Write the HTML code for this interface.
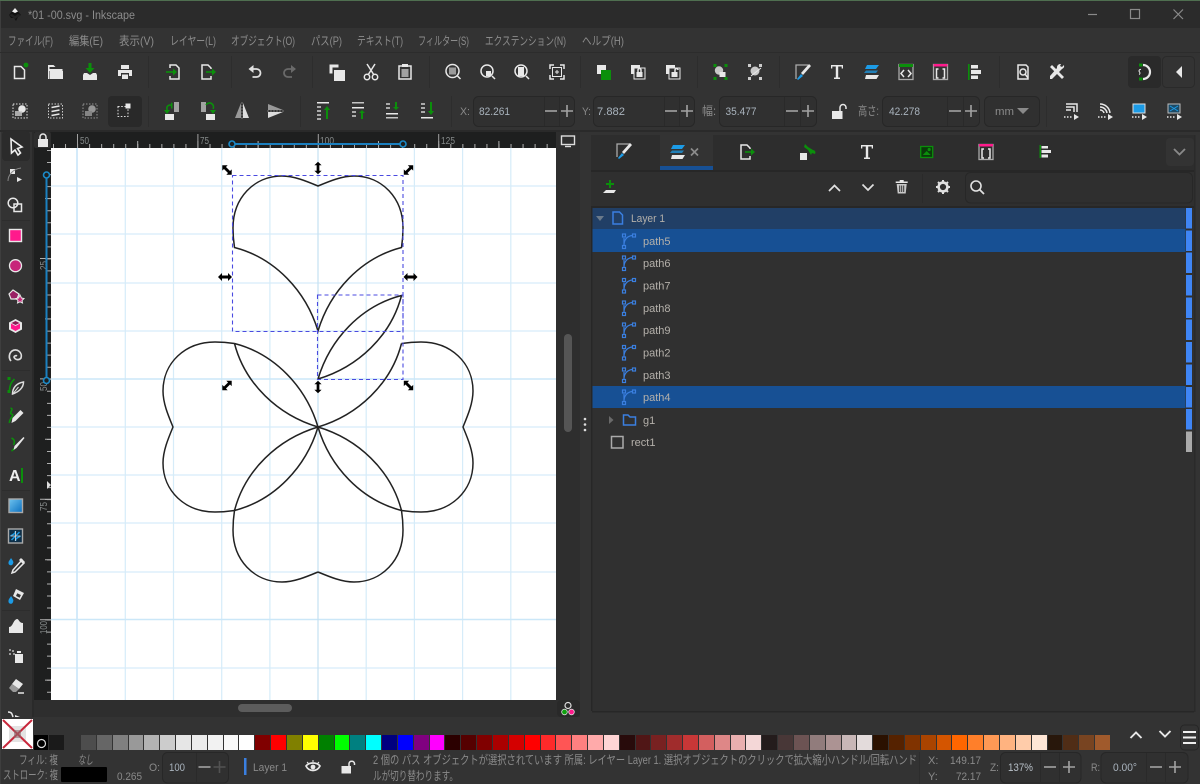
<!DOCTYPE html>
<html lang="ja"><head><meta charset="utf-8"><title>Inkscape</title>
<style>
html,body{margin:0;padding:0;background:#333;width:1200px;height:784px;overflow:hidden}
body{filter:blur(.3px)}
svg{position:absolute;left:0;top:0}
text{font-family:"Liberation Sans","Noto Sans CJK JP",sans-serif;font-size:11px;fill:#a8a8a8}
.m{fill:#8c8c8c;font-size:12px}
.l{fill:#b4b0aa;font-size:11px}
.d{fill:#8a8a8a;font-size:11px}
.j{font-size:12px}
.v{fill:#a9b3bd;font-size:11px}
.r{fill:#858a8a;font-size:10px}
.w{fill:#e8e8e8}
.s{fill:none;stroke:#e8e8e8;stroke-width:1.5}
.g{fill:#0b8f0b}
.gs{fill:none;stroke:#0b8f0b;stroke-width:1.6}
.b{fill:#1c9be6}
.p{fill:#ff1a8c}
.q{fill:#c8c8c8}
.pm{stroke:#a2a2a2;stroke-width:1.6;fill:none}
.box{fill:#303030;stroke:#272727;stroke-width:1}
#pal{position:absolute;left:33.5px;top:734.5px;width:1076.5px;height:15px;display:flex;gap:1px}
#pal i{flex:1;display:block}
</style></head><body>
<svg width="1200" height="784" viewBox="0 0 1200 784" xmlns="http://www.w3.org/2000/svg">
<defs>
<g id="pi" fill="none" stroke="#3a7fe0" stroke-width="1.2"><path d="M-5,-3 V4 M-5,4 C-5,-2 -1,-5 3,-5.5"/><rect x="-6.5" y="-7" width="3" height="3"/><rect x="3.5" y="-7" width="3" height="3"/><rect x="-6.5" y="4.5" width="3" height="3"/></g>
<path id="ar" d="M-7,0 L-3,-4 V-1.5 H3 V-4 L7,0 L3,4 V1.5 H-3 V4Z" fill="#000"/>
<g id="sp"><path class="pm" d="M-6,0 H6"/></g>
<g id="pl"><path class="pm" d="M-6,0 H6 M0,-6 V6"/></g>
</defs>
<rect width="1200" height="784" fill="#333"/>
<rect width="1200" height="28" fill="#2b2b2b"/>
<rect width="1200" height="1" fill="#4f6f50"/>
<rect y="1" width="1" height="783" fill="#3e3e3e"/>
<rect y="52" width="1200" height="1" fill="#2c2c2c"/>
<rect y="130" width="1200" height="2" fill="#2a2a2a"/>

<!-- title -->
<g transform="translate(15,15)"><path d="M0,-7 L6,0 L3,2 L1,6 L-1,3 L-4,3 L-6,0Z" fill="#111"/><path d="M0,-7 L3,-3.5 L0,-2 L-3,-3.5Z" fill="#eee"/><path d="M-6,0 L-3,-1 L0,1 L3,-1 L6,0 L0,4Z" fill="#222"/></g>
<text x="28" y="19" style="fill:#8c8c8c;font-size:11.5px" textLength="107" lengthAdjust="spacingAndGlyphs">*01 -00.svg - Inkscape</text>
<path d="M1088,14.5 H1097" stroke="#8a8a8a" stroke-width="1.2"/>
<rect x="1130.5" y="9.5" width="9" height="9" fill="none" stroke="#8a8a8a" stroke-width="1.2"/>
<path d="M1173.5,9.5 L1183,19 M1183,9.5 L1173.5,19" stroke="#8a8a8a" stroke-width="1.2"/>

<!-- menu -->
<text class="m" x="8" y="45" textLength="45" lengthAdjust="spacingAndGlyphs">ファイル(F)</text>
<text class="m" x="69" y="45" textLength="34" lengthAdjust="spacingAndGlyphs">編集(E)</text>
<text class="m" x="119" y="45" textLength="35" lengthAdjust="spacingAndGlyphs">表示(V)</text>
<text class="m" x="170" y="45" textLength="46" lengthAdjust="spacingAndGlyphs">レイヤー(L)</text>
<text class="m" x="231" y="45" textLength="64" lengthAdjust="spacingAndGlyphs">オブジェクト(O)</text>
<text class="m" x="311" y="45" textLength="31" lengthAdjust="spacingAndGlyphs">パス(P)</text>
<text class="m" x="357" y="45" textLength="46" lengthAdjust="spacingAndGlyphs">テキスト(T)</text>
<text class="m" x="418" y="45" textLength="51" lengthAdjust="spacingAndGlyphs">フィルター(S)</text>
<text class="m" x="485" y="45" textLength="81" lengthAdjust="spacingAndGlyphs">エクステンション(N)</text>
<text class="m" x="582" y="45" textLength="42" lengthAdjust="spacingAndGlyphs">ヘルプ(H)</text>

<!-- separators -->
<path d="M148.5,56V88 M231.5,56V88 M312.5,56V88 M429.5,56V88 M580.5,56V88 M697.5,56V88 M779.5,56V88 M999.5,56V88 M148.5,96V127 M300.5,96V127 M451.5,96V127 M1046.5,96V127" stroke="#2d2d2d"/>

<!-- row 1 icons -->
<g transform="translate(20,72)"><path class="s" d="M-5.5,-5.5 H1 L4.5,-2 V6.5 H-5.5Z"/><circle class="g" cx="6" cy="-7" r="2.4"/></g>
<g transform="translate(55.5,72)"><path class="w" d="M-7.5,-7 H-2 L0,-5 H-6 V-3 H7 V-1 H-6 V7 H7.5 V-1 L7.5,7 H-7.5Z"/><path class="w" d="M-5.5,-1 H7.5 V7 H-5.5Z"/></g>
<g transform="translate(90,72)"><path class="g" d="M-1.5,-9 H1.5 V-4 H4.5 L0,1 L-4.5,-4 H-1.5Z"/><path class="w" d="M-6,1 H-3 L0,3 L3,1 H6 L7,3 V8 H-7 V3Z"/></g>
<g transform="translate(125,72)"><path class="w" d="M-4,-7 H4 V-3 H-4Z M-7,-2 H7 V4 H4 V1 H-4 V4 H-7Z M-3,2.5 H3 V7 H-3Z"/></g>
<g transform="translate(173,72)"><path class="s" d="M-3,-4 V-7 H3 L6,-4 V7 H-3 V4"/><path class="gs" d="M-7,0 H1"/><path class="g" d="M0,-3.5 L4,0 L0,3.5Z"/></g>
<g transform="translate(207,72)"><path class="s" d="M4,-3 V-4 L1,-7 H-5 V7 H4 V4"/><path class="gs" d="M-1,0 H6"/><path class="g" d="M5,-3.5 L9,0 L5,3.5Z"/></g>
<g transform="translate(254.5,72)"><path d="M-5,-3 H2 A4,4 0 0 1 2,5 H-2" fill="none" stroke="#e0e0e0" stroke-width="1.8"/><path d="M-1,-7 L-6,-3 L-1,1Z" fill="#e0e0e0"/></g>
<g transform="translate(290,72)"><path d="M5,-3 H-2 A4,4 0 0 0 -2,5 H2" fill="none" stroke="#6a6a6a" stroke-width="1.8"/><path d="M1,-7 L6,-3 L1,1Z" fill="#6a6a6a"/></g>
<g transform="translate(337,72)"><rect class="w" x="-7.5" y="-7.5" width="9" height="9"/><rect x="-4.5" y="-4.5" width="11" height="11" fill="#333"/><rect class="w" x="-3" y="-2" width="11" height="11"/></g>
<g transform="translate(371,72)"><path class="s" d="M-4,-8 L3,3 M4,-8 L-3,3"/><circle class="s" cx="-4" cy="5" r="2.7"/><circle class="s" cx="4" cy="5" r="2.7"/></g>
<g transform="translate(405,72)"><path class="s" d="M-6,-6 H6 V7 H-6Z"/><rect class="w" x="-3" y="-8" width="6" height="3"/><rect class="q" x="-3.5" y="-3" width="7" height="8" opacity=".75"/></g>
<g transform="translate(453.5,72)"><circle class="s" cx="-1" cy="-1" r="6.5" stroke-width="2"/><rect class="q" x="-4.5" y="-4.5" width="7" height="7" opacity=".7"/><path class="s" d="M4,4 L7,7" stroke-width="2.4"/></g>
<g transform="translate(488,72)"><circle class="s" cx="-1" cy="-1" r="6" stroke-width="2.4"/><rect class="w" x="-2" y="-1" width="5" height="5"/><path class="s" d="M4,4 L7,7" stroke-width="2.4"/></g>
<g transform="translate(522,72)"><circle class="s" cx="-1" cy="-1" r="6" stroke-width="2"/><rect class="w" x="-4" y="-5" width="6" height="9"/><path class="s" d="M4,4 L7,7" stroke-width="2.4"/></g>
<g transform="translate(557,72)"><path class="s" d="M-7,-3 V-7 H-3 M3,-7 H7 V-3 M7,3 V7 H3 M-3,7 H-7 V3" stroke-width="1.2"/><rect x="-4.5" y="-4.5" width="9" height="9" fill="none" stroke="#e8e8e8"/><path d="M-2,0 H2 M0,-2 V2" stroke="#e8e8e8"/></g>
<g transform="translate(604,72)"><rect class="w" x="-7" y="-7" width="9" height="9"/><rect class="g" x="-3" y="-2" width="10" height="10"/></g>
<g transform="translate(638,72)"><rect class="w" x="-7" y="-7" width="9" height="9"/><rect x="-4" y="-4" width="11" height="11" fill="#333" stroke="#e8e8e8"/><rect class="w" x="-1.5" y="0" width="6" height="5"/><path class="s" d="M0,0 V-2 A1.5,1.5 0 0 1 3,-2 V0" stroke-width="1"/></g>
<g transform="translate(673,72)"><rect class="w" x="-7" y="-7" width="9" height="9"/><rect x="-4" y="-4" width="11" height="11" fill="#333" stroke="#e8e8e8"/><rect class="w" x="-1.5" y="0" width="6" height="5"/><path class="s" d="M2,0 V-2 A1.5,1.5 0 0 1 5,-2" stroke-width="1"/></g>
<g transform="translate(720.5,72)"><path class="g" d="M-7,-8h3v3h-3z M4,-8h3v3h-3z M-7,5h3v3h-3z M4,5h3v3h-3z"/><circle class="q" cx="-1.5" cy="-1.5" r="4.2"/><rect class="w" x="-1" y="0" width="6" height="5"/></g>
<g transform="translate(755,72)"><path class="w" d="M-7,-8h3v3h-3z M4,-8h3v3h-3z M-7,5h3v3h-3z M4,5h3v3h-3z" opacity=".85"/><circle class="q" cx="0" cy="-1" r="4.5"/><path d="M-4,4 L6,-4" stroke="#e8e8e8"/></g>
<g transform="translate(803,72)"><path d="M5,-7 H-7 V7" fill="none" stroke="#aaa" stroke-width="1.3"/><path class="w" d="M6,-8 L8,-6 L0,3 L-2,1Z"/><path class="b" d="M-2,2 L0,4 L-5,8 L-6,7Z"/></g>
<g transform="translate(837,72)"><path class="w" d="M-6,-7 H6 V-3.5 H4.7 V-5.5 H1.2 V5.5 H3 V7 H-3 V5.5 H-1.2 V-5.5 H-4.7 V-3.5 H-6Z"/></g>
<g transform="translate(872,72)"><path class="b" d="M-5,-7 H7 L4,-3 H-7Z"/><path class="b" d="M-6,-1.5 H6 L4,1 H-8Z" opacity=".75"/><path class="w" d="M-6,3 H7 L4.5,7 H-7Z"/></g>
<g transform="translate(906,72)"><rect x="-7" y="-7.5" width="14" height="15" fill="none" stroke="#aaa" stroke-width="1.3"/><rect class="g" x="-7" y="-8" width="14" height="3"/><path class="s" d="M-2,-2 L-5,1.5 L-2,5 M2,-2 L5,1.5 L2,5" stroke-width="1.1"/></g>
<g transform="translate(940.5,72)"><rect x="-7" y="-7.5" width="14" height="15" fill="none" stroke="#aaa" stroke-width="1.3"/><rect class="p" x="-7" y="-8" width="14" height="2.5"/><path class="s" d="M-2,-3 H-4 V6 H-2 M2,-3 H4 V6 H2" stroke-width="1.1"/></g>
<g transform="translate(975,72)"><rect class="g" x="-7" y="-8" width="1.6" height="16"/><path class="w" d="M-4,-7 H3 V-3.5 H-4Z M-4,-2 H6 V2 H-4Z M-4,3.5 H3 V7 H-4Z"/></g>
<g transform="translate(1023,72)"><path class="s" d="M-5,-7 H3 L5,-5 V7 H-5Z"/><circle class="s" cx="0" cy="0" r="3"/><path class="s" d="M2,2 L5,6" stroke-width="2"/></g>
<g transform="translate(1057,72)"><path class="w" d="M-7,-5 L-5,-7 L7,5 L5,7Z"/><path class="w" d="M-7,7 L-5,7 L5,-3 A3.5,3.5 0 0 0 7,-7 L5,-5 L3,-6 L4,-8 A3.5,3.5 0 0 0 0,-4 L-7,4Z"/></g>
<rect x="1128" y="56" width="33" height="32" rx="4" fill="#2a2a2a"/>
<g transform="translate(1144,72)"><path d="M-1,-7 A7,7 0 0 1 -1,7" fill="none" stroke="#e8e8e8" stroke-width="2.2"/><rect class="g" x="-5" y="-8.5" width="3.5" height="3"/><rect class="g" x="-5" y="5.5" width="3.5" height="3"/><path d="M-3,-2.5 A1.5,1.5 0 0 0 -4.5,0 A1.5,1.5 0 0 1 -5,2.5" fill="none" stroke="#e8e8e8"/></g>
<rect x="1162.5" y="56.5" width="32" height="31" rx="4" fill="#333" stroke="#2a2a2a"/>
<path class="w" d="M1182,66 V78 L1176,72Z"/>

<!-- row 2 icons -->
<g transform="translate(20,111)"><rect x="-7" y="-7" width="14" height="14" fill="none" stroke="#ddd" stroke-dasharray="1.5 1.5"/><circle class="w" cx="2" cy="-2" r="3.8"/><rect class="q" x="-5" y="0" width="7" height="5" opacity=".8"/></g>
<g transform="translate(55.5,111)"><rect x="-7" y="-7" width="14" height="14" fill="none" stroke="#ccc" stroke-dasharray="1.5 1.5"/><path class="s" d="M-4,-3.5 L4,-5 M-4,0.5 L4,-1 M-4,4.5 L4,3" stroke-width="2"/></g>
<g transform="translate(90,111)" opacity=".55"><rect x="-7" y="-7" width="14" height="14" fill="none" stroke="#ddd" stroke-dasharray="1.5 1.5"/><circle class="w" cx="2" cy="-2" r="3.8"/><rect class="q" x="-5" y="0" width="7" height="5"/></g>
<rect x="108" y="96" width="34" height="31" rx="4" fill="#292929"/>
<g transform="translate(124.5,111)"><rect x="-6.5" y="-4.5" width="10" height="10" fill="none" stroke="#ddd" stroke-dasharray="1.6 1.6"/><rect class="w" x="1" y="-7.5" width="5" height="5"/></g>
<g transform="translate(173,111)"><rect class="q" x="1" y="-9" width="5" height="10" opacity=".75"/><rect class="w" x="-8" y="3" width="9" height="6"/><path class="gs" d="M-6,1 V-2 A3,3 0 0 1 -1,-5" stroke-width="2"/><path class="g" d="M-2,-8.5 V-2.5 H-0.5 L-0.5,-8Z"/><path class="g" d="M-9,-1 H-3 L-6,3Z"/></g>
<g transform="translate(207,111)"><rect class="q" x="-6" y="-9" width="5" height="10" opacity=".75"/><rect class="w" x="-1" y="3" width="9" height="6"/><path class="gs" d="M-1,-6 A4,4 0 0 1 6,-2" stroke-width="2"/><path class="g" d="M3,-1 H9 L6,3Z"/></g>
<g transform="translate(242,111)"><path d="M-1,-8 V7 H-7Z" fill="#999"/><path d="M1,-8 V7 H7Z" fill="#ddd"/><path d="M0,-9 V8" stroke="#777" stroke-dasharray="2 1"/></g>
<g transform="translate(276,111)"><path d="M-8,-1 H7 L-8,-7Z" fill="#999"/><path d="M-8,1 H7 L-8,7Z" fill="#ddd"/><path d="M-9,0 H8" stroke="#777" stroke-dasharray="2 1"/></g>
<g transform="translate(323,111)"><rect class="w" x="-6" y="-9" width="12" height="1.5"/><path class="q" d="M-6,-5h4v2h-4z M-6,-1h4v2h-4z M-6,3h4v2h-4z M-6,7h4v2h-4z" opacity=".8"/><path class="g" d="M2,-1 L5,-5 L8,-1 H6 V8 H4 V-1Z" transform="translate(-1,0)"/></g>
<g transform="translate(358,111)"><rect class="w" x="-6" y="-9" width="12" height="1.5" opacity=".8"/><rect class="w" x="-6" y="-4" width="12" height="1.5"/><path class="q" d="M-6,0h4v2h-4z M-6,4h4v2h-4z" opacity=".8"/><path class="g" d="M1,2 L4,-1 L7,2 H5 V8 H3 V2Z"/></g>
<g transform="translate(392,111)"><path class="q" d="M-6,-8h4v2h-4z M-6,-4h4v2h-4z" opacity=".8"/><rect class="w" x="-6" y="2" width="12" height="1.5"/><rect class="w" x="-6" y="6" width="12" height="1.5" opacity=".8"/><path class="g" d="M3,-9 H5 V-4 H7 L4,-1 L1,-4 H3Z"/></g>
<g transform="translate(427,111)"><path class="q" d="M-6,-8h4v2h-4z M-6,-4h4v2h-4z M-6,0h4v2h-4z" opacity=".8"/><rect class="w" x="-6" y="6" width="12" height="1.5"/><path class="g" d="M3,-9 H5 V0 H7 L4,4 L1,0 H3Z"/></g>
<g transform="translate(1071,111)"><path class="s" d="M-5,-7 H6 V1 M-5,-4 H3 V1 M-5,-1 H0" stroke-width="1.2"/><path d="M-7,6 H2" stroke="#e8e8e8" stroke-dasharray="1.5 1.5" stroke-width="1.4"/><path class="w" d="M3,3 L8,6 L3,9Z"/></g>
<g transform="translate(1105,111)"><path class="s" d="M-5,-7 A10,10 0 0 1 5,2 M-5,-4 A7,7 0 0 1 2,2 M-5,-1 A4,4 0 0 1 -1,2" stroke-width="1.2"/><path d="M-7,6 H2" stroke="#e8e8e8" stroke-dasharray="1.5 1.5" stroke-width="1.4"/><path class="w" d="M3,3 L8,6 L3,9Z"/></g>
<g transform="translate(1139,111)"><rect x="-6" y="-7" width="12" height="9" fill="#1c9be6" stroke="#ddd"/><path d="M-7,6 H2" stroke="#e8e8e8" stroke-dasharray="1.5 1.5" stroke-width="1.4"/><path class="w" d="M3,3 L8,6 L3,9Z"/></g>
<g transform="translate(1174,111)"><rect x="-6" y="-7" width="12" height="9" fill="#1b4a66" stroke="#bbb"/><path d="M-4,-5 L4,0 M4,-5 L-4,0" stroke="#1c9be6"/><path d="M-7,6 H2" stroke="#e8e8e8" stroke-dasharray="1.5 1.5" stroke-width="1.4"/><path class="w" d="M3,3 L8,6 L3,9Z"/></g>

<!-- spin boxes -->
<text class="d" x="460" y="115" textLength="10" lengthAdjust="spacingAndGlyphs">X:</text>
<rect class="box" x="473.5" y="96.5" width="101" height="30" rx="5"/><path d="M544.5,97V126 M559.5,97V126" stroke="#2a2a2a"/>
<text class="v" x="479" y="115" textLength="31" lengthAdjust="spacingAndGlyphs">82.261</text>
<use href="#sp" x="551" y="111"/><use href="#pl" x="567" y="111"/>
<text class="d" x="582" y="115" textLength="9" lengthAdjust="spacingAndGlyphs">Y:</text>
<rect class="box" x="593.5" y="96.5" width="101" height="30" rx="5"/><path d="M664.5,97V126 M679.5,97V126" stroke="#2a2a2a"/>
<text class="v" x="597" y="115" textLength="28" lengthAdjust="spacingAndGlyphs">7.882</text>
<use href="#sp" x="671" y="111"/><use href="#pl" x="687" y="111"/>
<text class="d j" x="702" y="115" textLength="14" lengthAdjust="spacingAndGlyphs">幅:</text>
<rect class="box" x="719.5" y="96.5" width="97" height="30" rx="5"/><path d="M784.5,97V126 M800.5,97V126" stroke="#2a2a2a"/>
<text class="v" x="725.5" y="115" textLength="31" lengthAdjust="spacingAndGlyphs">35.477</text>
<use href="#sp" x="792" y="111"/><use href="#pl" x="808" y="111"/>
<g transform="translate(838,111)"><rect class="w" x="-6" y="0" width="10.5" height="8"/><path class="s" d="M2,0 V-3.5 A3,3 0 0 1 8,-3.5 V-2" stroke-width="1.8"/></g>
<text class="d j" x="858" y="115" textLength="21" lengthAdjust="spacingAndGlyphs">高さ:</text>
<rect class="box" x="882.5" y="96.5" width="97" height="30" rx="5"/><path d="M947.5,97V126 M963.5,97V126" stroke="#2a2a2a"/>
<text class="v" x="889" y="115" textLength="31" lengthAdjust="spacingAndGlyphs">42.278</text>
<use href="#sp" x="955" y="111"/><use href="#pl" x="971" y="111"/>
<rect class="box" x="984.5" y="96.5" width="55" height="30" rx="5"/>
<text class="d" x="995" y="115" textLength="19" lengthAdjust="spacingAndGlyphs">mm</text>
<path d="M1017,108 H1029 L1023,114Z" fill="#8a8a8a"/>

<!-- left toolbar -->
<rect x="32" y="132" width="2" height="585" fill="#2a2a2a"/>
<rect x="2" y="131" width="28" height="30" rx="4" fill="#2b2b2b"/>
<path d="M2,220.5H30 M2,370.5H30 M2,490.5H30 M2,610.5H30" stroke="#2d2d2d"/>
<path d="M11,139 L22,147 L17.5,148.5 L20.5,153 L18,155 L15,150 L11.5,153Z" fill="none" stroke="#eee" stroke-width="1.6"/>
<g transform="translate(15,175)"><rect class="w" x="-5" y="-6" width="5" height="5"/><path d="M-7,6 C-7,0 -2,-6 6,-7" fill="none" stroke="#888"/><path class="w" d="M2,2 L7,4.5 L2,7Z"/></g>
<g transform="translate(15,205)"><circle class="s" cx="-2" cy="-2" r="4.8" stroke-width="1.7"/><rect class="s" x="-1" y="-1" width="7.5" height="7.5" stroke-width="1.7"/></g>
<rect x="9.5" y="229.5" width="12" height="12" fill="#ff1a8c" stroke="#e8e8e8" stroke-width="1.4"/>
<circle cx="15.5" cy="265.7" r="6" fill="#c7257a" stroke="#e8e8e8" stroke-width="1.3"/>
<g transform="translate(16,296)"><path d="M-3,-6 L3,-2 L1,3 L-5,3 L-7,-2Z" fill="#9a2065" stroke="#e8e8e8" stroke-width="1.2"/><path d="M4,-1 L5.5,2 L8,2.5 L6,4.5 L6.5,7 L4,5.8 L1.5,7 L2,4.5 L0,2.5 L2.5,2Z" fill="#c7257a" stroke="#e8e8e8"/></g>
<g transform="translate(15.5,326)"><path d="M0,-7 L6.5,-3.5 V3.5 L0,7 L-6.5,3.5 V-3.5Z" fill="#e8e8e8"/><path d="M-4.5,-2.5 L0,0 V5 L-4.5,2.5Z" fill="#ff1a8c"/><path d="M4.5,-2.5 L0,0 V5 L4.5,2.5Z" fill="#ff1a8c"/><path d="M0,-5 L4,-3 L0,-1 L-4,-3Z" fill="#8a1a55"/></g>
<g transform="translate(16,356)"><path d="M1,0 A2,2 0 0 0 -2,1 A4,4 0 0 0 5,2 A6,6 0 0 0 -4,-5 A7,7 0 0 0 -5,5" fill="none" stroke="#ddd" stroke-width="1.7"/></g>
<g transform="translate(15.5,386)"><path d="M-6,5 C-6,-2 -3,-5 -1,-7" class="gs"/><rect class="g" x="-8" y="-9" width="3" height="3"/><rect class="g" x="-8" y="4" width="3" height="3"/><path d="M8,-4 C8,2 3,6 -3,8 C-3,2 1,-3 8,-4Z" fill="none" stroke="#ddd" stroke-width="1.5"/><path d="M-2,7 L3,1" stroke="#ddd"/></g>
<g transform="translate(15.5,416)"><path d="M-5,-8 C-1,-7 -7,-3 -4,-2 C0,-1 -7,3 -6,7" class="gs"/><path class="w" d="M5,-6 L8,-3 L0,5 L-4,7 L-3,2Z"/></g>
<g transform="translate(15.5,445)"><path d="M-4,-7 C0,-5 -1,-2 -2,0 M-4,6 C-2,5 -1,3 0,2" class="gs"/><path class="w" d="M8,-8 L9,-7 L1,3 L-2,5 L-1,1Z"/></g>
<text x="9" y="481" style="font-size:16px;font-weight:700;fill:#eee">A</text><rect class="g" x="21" y="468" width="2" height="15"/>
<defs><linearGradient id="gr" x1="0" y1="0" x2="1" y2="1"><stop offset="0" stop-color="#6fc3ef"/><stop offset="1" stop-color="#0a6fc0"/></linearGradient></defs>
<rect x="9" y="499" width="13.5" height="13.5" fill="url(#gr)" stroke="#aaa" stroke-width="1.4"/>
<g transform="translate(15.5,536)"><rect x="-7" y="-7" width="14" height="14" fill="#0e2f48" stroke="#aaa" stroke-width="1.4"/><path d="M-5,0 C-2,-2 0,-2 0,-5 M5,0 C2,2 0,2 0,5 M0,0 L-4,4 M0,0 L4,-4" stroke="#1c9be6" stroke-width="1.5" fill="none"/><path d="M-5,0 H5 M0,-5 V5" stroke="#ddd" stroke-width=".8"/></g>
<g transform="translate(16,566)"><path class="b" d="M-5,-8 C-3,-5 -2,-4 -3,-2.5 A2.3,2.3 0 0 1 -7.5,-3.5 C-7.5,-5 -6,-6 -5,-8Z"/><path class="s" d="M6,-6 L-3,4 L-4,7 L-1,6 L8,-3Z" stroke-width="1.5"/><path class="w" d="M5,-8 L9,-4 L7,-2 L3,-6Z"/></g>
<g transform="translate(16,596)"><path class="b" d="M-5,0 C-3,3 -2,4 -3,6 A2.3,2.3 0 0 1 -7.5,5 C-7.5,3 -6,2 -5,0Z"/><path class="w" d="M0,-7 L8,-3 L4,4 L-3,0Z"/><rect x="0" y="-3" width="4" height="3" fill="#333" transform="rotate(25)"/></g>
<g transform="translate(16,626)"><path class="w" d="M-7,7 V1 C-3,1 -3,-6 1,-7 C3,-7 3,-3 7,-3 V7Z"/></g>
<g transform="translate(16,656)"><path class="w" d="M-1,-2 H7 V7 H-1Z M1,-5 H5 V-3 H1Z"/><path d="M-7,-7h2v2h-2z M-4,-6h2v2h-2z M-7,-3h2v2h-2z M-3,-3h2v2h-2z" fill="#999"/></g>
<g transform="translate(16,686)"><path class="w" d="M0,-7 L7,-2 L3,3 L-4,-2Z"/><path d="M-4,-2 L3,3 L0,6 H-3 L-7,2Z" fill="#999"/><path class="s" d="M2,7 H8"/></g>
<path d="M8,712 C12,712 12,714 13,717" class="s"/><path class="w" d="M15,715 L20,717 H15Z"/>

<!-- rulers -->
<rect x="34" y="132" width="522" height="16" fill="#1e1f1f"/>
<rect x="34" y="148" width="17" height="552" fill="#1e1f1f"/>
<rect x="34" y="132" width="17" height="16" rx="2" fill="#2e2e2e"/>
<g transform="translate(43,141)"><rect class="w" x="-5" y="-2" width="10" height="8"/><path class="s" d="M-3,-2 V-4 A3,3 0 0 1 3,-4 V-2" stroke-width="1.6"/></g>
<path d="M53,146 H556" stroke="#b0b0b0" stroke-width="4" stroke-dasharray="1 11.04"/>
<path d="M77,144.5 H556" stroke="#b0b0b0" stroke-width="7" stroke-dasharray="1 59.2"/>
<path d="M77,141 H556" stroke="#a0a0a0" stroke-width="14" stroke-dasharray="1 119.4"/>
<path d="M49,150 V700" stroke="#b0b0b0" stroke-width="4" stroke-dasharray="1 11.04"/>
<path d="M48,198 V700" stroke="#b0b0b0" stroke-width="6" stroke-dasharray="1 59.2"/>
<path d="M45.5,258 V700" stroke="#b0b0b0" stroke-width="11" stroke-dasharray="1 119.4"/>
<text class="r" x="80" y="144" textLength="9" lengthAdjust="spacingAndGlyphs">50</text><text class="r" x="200" y="144" textLength="9" lengthAdjust="spacingAndGlyphs">75</text><text class="r" x="320" y="144" textLength="14" lengthAdjust="spacingAndGlyphs">100</text><text class="r" x="441" y="144" textLength="14" lengthAdjust="spacingAndGlyphs">125</text>
<text class="r" transform="translate(47,270) rotate(-90)" textLength="9" lengthAdjust="spacingAndGlyphs">25</text>
<text class="r" transform="translate(47,391) rotate(-90)" textLength="9" lengthAdjust="spacingAndGlyphs">50</text>
<text class="r" transform="translate(47,511) rotate(-90)" textLength="9" lengthAdjust="spacingAndGlyphs">75</text>
<text class="r" transform="translate(47,634) rotate(-90)" textLength="13" lengthAdjust="spacingAndGlyphs">100</text>
<path d="M47,481 L51,485 L47,489Z" fill="#ddd"/>

<!-- canvas -->
<rect x="51" y="148" width="505" height="552" fill="#fff"/>
<path d="M77,148V700 M125.3,148V700 M173.5,148V700 M221.7,148V700 M269.9,148V700 M318,148V700 M366.2,148V700 M414.4,148V700 M462.6,148V700 M510.8,148V700" stroke="#d6ecf9" stroke-width="1.2"/>
<path d="M51,186H556 M51,234H556 M51,283H556 M51,331H556 M51,427H556 M51,475H556 M51,523H556 M51,572H556 M51,668H556" stroke="#d6ecf9" stroke-width="1.2"/>
<path d="M51,379H556 M51,619.5H556 M77,148V700" stroke="#cbe7f8" stroke-width="1.6"/>
<path d="M318,148V700" stroke="#c2dff0" stroke-width="1"/>

<g fill="none" stroke="#222" stroke-width="1.5">
<path d="M318,186 C306,181 294,176 282,176 C254,176 233,198 233,228 C233,235 233.5,241 234.5,247.5 C275,258 306,291 318,331 C330,291 361,258 401.5,247.5 C402.5,241 403,235 403,228 C403,198 382,176 354,176 C342,176 330,181 318,186Z"/>
<path d="M318,572 C306,577 294,582 282,582 C254,582 233,560 233,530 C233,523 233.5,517 234.5,510.5 M318,572 C330,577 342,582 354,582 C382,582 403,560 403,530 C403,523 402.5,517 401.5,510.5"/>
<path d="M234.5,343.5 C228,342.5 222,342 215,342 C185,342 163,363 163,391 C163,403 168,415 173,427 C168,439 163,451 163,463 C163,491 185,512 215,512 C222,512 228,511.5 234.5,510.5"/>
<path d="M401.5,343.5 C408,342.5 414,342 421,342 C451,342 473,363 473,391 C473,403 468,415 463,427 C468,439 473,451 473,463 C473,491 451,512 421,512 C414,512 408,511.5 401.5,510.5"/>
<path d="M234.5,343.5 C275,354 306,387 318,427 M234.5,343.5 C245,384 278,415 318,427 M401.5,343.5 C391,384 358,415 318,427"/>
<path d="M234.5,510.5 C275,500 306,467 318,427 M234.5,510.5 C245,470 278,439 318,427"/>
<path d="M401.5,510.5 C361,500 330,467 318,427 M401.5,510.5 C391,470 358,439 318,427"/>
<path d="M401.5,295.5 C361,306 330,339 318,379 C358,367 391,336 401.5,295.5Z"/>
</g>
<g fill="none" stroke="#4a4ae0" stroke-width="1.1" stroke-dasharray="4 3">
<rect x="232.5" y="175.5" width="170.5" height="156"/>
<rect x="317.5" y="295" width="85.5" height="84.5"/>
</g>
<use href="#ar" transform="translate(227,170) rotate(45) scale(.95)"/>
<use href="#ar" transform="translate(318,168) rotate(90) scale(.9)"/>
<use href="#ar" transform="translate(408.5,170) rotate(-45) scale(.95)"/>
<use href="#ar" transform="translate(225,277)"/>
<use href="#ar" transform="translate(410.5,277)"/>
<use href="#ar" transform="translate(227,385.5) rotate(-45) scale(.95)"/>
<use href="#ar" transform="translate(318,387) rotate(90) scale(.9)"/>
<use href="#ar" transform="translate(408.5,385.5) rotate(45) scale(.95)"/>

<!-- guides -->
<path d="M232,144 H403 M46.5,175 V380.5" stroke="#1b80c0" stroke-width="2"/>
<g fill="#1e1f1f" stroke="#1b8ac8" stroke-width="1.6"><circle cx="232" cy="144" r="3"/><circle cx="403" cy="144" r="3"/><circle cx="46.5" cy="175" r="3"/><circle cx="46.5" cy="380.5" r="3"/></g>

<!-- scroll areas -->
<rect x="34" y="700" width="546" height="17" fill="#2e2e2e"/>
<rect x="556" y="132" width="24" height="585" fill="#2e2e2e"/>
<rect x="238" y="704" width="54" height="8" rx="4" fill="#5c5c5c"/>
<rect x="564" y="334" width="8" height="98" rx="4" fill="#555"/>
<g transform="translate(568,141)"><rect x="-6.5" y="-5" width="13" height="8.5" fill="none" stroke="#ddd" stroke-width="1.4"/><path d="M-3,5.5 H3" stroke="#ddd" stroke-width="1.4"/></g>
<rect x="557" y="700" width="23" height="17" rx="4" fill="#292929"/>
<circle cx="568" cy="705.5" r="3" fill="none" stroke="#ddd" stroke-width="1.2"/>
<circle cx="564.5" cy="712" r="2.8" fill="#0fa00f" stroke="#ddd" stroke-width=".8"/>
<circle cx="571.5" cy="712" r="2.8" fill="#ff1a8c" stroke="#ddd" stroke-width=".8"/>
<g fill="#ddd"><circle cx="585" cy="419" r="1.3"/><circle cx="585" cy="424.5" r="1.3"/><circle cx="585" cy="430" r="1.3"/></g>

<!-- panel -->
<rect x="591" y="135" width="603" height="35" fill="#2d2d2d"/>
<rect x="660" y="135" width="53" height="35" fill="#333"/>
<rect x="660" y="166" width="53" height="4" fill="#175094"/>
<rect x="591" y="170" width="603" height="2" fill="#272727"/>
<rect x="591" y="172" width="603" height="34" fill="#2f2f2f"/>
<rect x="591" y="206" width="603" height="2" fill="#272727"/>
<rect x="592" y="208" width="602" height="503" fill="#303030"/>
<rect x="591" y="208" width="1.5" height="503" fill="#272727"/>
<rect x="592" y="711" width="602" height="1.5" fill="#272727"/>
<rect x="1194" y="135" width="1.5" height="577" fill="#2a2a2a"/>
<g transform="translate(624,151)"><path d="M6,-7 H-7 V6" fill="none" stroke="#aaa" stroke-width="1.3"/><path class="w" d="M6,-8 L8,-6 L0,3 L-2,1Z"/><path class="b" d="M-2,2 L0,4 L-5,8 L-6,7Z"/></g>
<g transform="translate(678,152)"><path class="b" d="M-5,-7 H7 L4,-3 H-7Z"/><path class="b" d="M-6,-1.5 H6 L4,1 H-8Z" opacity=".75"/><path class="w" d="M-6,3 H7 L4.5,7 H-7Z"/></g>
<path d="M691,148.5 L698,155.5 M698,148.5 L691,155.5" stroke="#8c8c8c" stroke-width="1.7"/>
<g transform="translate(746,152)"><path class="s" d="M4,-3 V-4 L1,-7 H-5 V7 H4 V4"/><path class="gs" d="M-1,0 H6"/><path class="g" d="M5,-3.5 L9,0 L5,3.5Z"/></g>
<g transform="translate(807,152)"><rect class="w" x="-7" y="1" width="7" height="7"/><path class="g" d="M-2,-8 L1,-5 L6,-2 A2.5,2.5 0 0 1 8,2 L5,1 L4,3 L1,-2 L-3,-5Z"/></g>
<g transform="translate(867,152)"><path class="w" d="M-6,-7 H6 V-3.5 H4.7 V-5.5 H1.2 V5.5 H3 V7 H-3 V5.5 H-1.2 V-5.5 H-4.7 V-3.5 H-6Z"/></g>
<g transform="translate(926.7,152)"><rect x="-6" y="-5.5" width="12" height="11" fill="#0a3a0a" stroke="#0b8f0b" stroke-width="1.3"/><path class="g" d="M-4,3 L0,-1 L4,3Z"/><circle class="g" cx="2.5" cy="-2.5" r="1.6"/></g>
<g transform="translate(986,152)"><rect x="-7" y="-7.5" width="14" height="15" fill="none" stroke="#aaa" stroke-width="1.3"/><rect class="p" x="-7" y="-8" width="14" height="2.5"/><path class="s" d="M-2,-3 H-4 V6 H-2 M2,-3 H4 V6 H2" stroke-width="1.1"/></g>
<g transform="translate(1045,152)"><rect class="g" x="-5.5" y="-7" width="1.5" height="13"/><path class="w" d="M-3.5,-6 H3 V-3.5 H-3.5Z M-3.5,-2 H6 V1 H-3.5Z M-3.5,2.5 H3 V5.5 H-3.5Z"/></g>
<rect x="1166" y="138" width="28" height="28" rx="4" fill="#333"/>
<path d="M1174,149 L1179.5,154.5 L1185,149" fill="none" stroke="#8a8a8a" stroke-width="1.8"/>

<g transform="translate(610,187)"><path class="g" d="M-1,-7 H1 V-4 H4 V-2 H1 V1 H-1 V-2 H-4 V-4 H-1Z"/><path class="w" d="M-4,3 H6 L4,6 H-7Z"/></g>
<path d="M829,191 L834.5,185.5 L840,191" fill="none" stroke="#e0e0e0" stroke-width="1.7"/>
<path d="M862.5,184.5 L868,190 L873.5,184.5" fill="none" stroke="#e0e0e0" stroke-width="1.7"/>
<g transform="translate(901.7,187)"><path class="q" d="M-5,-3 H5 L4,6.5 H-4Z"/><path class="w" d="M-6,-5.5 H-2 V-7 H2 V-5.5 H6 V-4 H-6Z"/><path d="M-2,-1.5V5 M0,-1.5V5 M2,-1.5V5" stroke="#333"/></g>
<g transform="translate(943,187)"><circle cx="0" cy="0" r="4.4" fill="none" stroke="#e0e0e0" stroke-width="2.6"/><path d="M0,-7V-5 M0,7V5 M-7,0H-5 M7,0H5 M-5,-5L-3.5,-3.5 M5,5L3.5,3.5 M-5,5L-3.5,3.5 M5,-5L3.5,-3.5" stroke="#e0e0e0" stroke-width="2"/></g>
<path d="M922.5,174V203" stroke="#2a2a2a"/>
<rect x="965.5" y="172.5" width="227" height="30.5" rx="5" fill="#2f2f2f" stroke="#272727"/>
<circle cx="976" cy="186" r="5" fill="none" stroke="#e0e0e0" stroke-width="1.6"/><path d="M979.5,189.5 L984,194" stroke="#e0e0e0" stroke-width="1.8"/>

<!-- rows -->
<rect x="592.5" y="208" width="593" height="21" fill="#213f66"/>
<rect x="592.5" y="229" width="593" height="23" fill="#175094"/>
<rect x="592.5" y="386" width="593" height="22" fill="#175094"/>
<path d="M596,216 H604 L600,221Z" fill="#6b7a8a"/>
<path d="M613,212 H619.5 L622.5,215 V224 H613Z" fill="none" stroke="#3a7fe0" stroke-width="1.5"/>
<text class="l" x="631" y="222" textLength="34" lengthAdjust="spacingAndGlyphs">Layer 1</text>
<use href="#pi" x="629" y="241"/><text class="l" x="643" y="245">path5</text>
<use href="#pi" x="629" y="263"/><text class="l" x="643" y="267">path6</text>
<use href="#pi" x="629" y="285.5"/><text class="l" x="643" y="289.5">path7</text>
<use href="#pi" x="629" y="308"/><text class="l" x="643" y="312">path8</text>
<use href="#pi" x="629" y="330"/><text class="l" x="643" y="334">path9</text>
<use href="#pi" x="629" y="352.5"/><text class="l" x="643" y="356.5">path2</text>
<use href="#pi" x="629" y="375"/><text class="l" x="643" y="379">path3</text>
<use href="#pi" x="629" y="397"/><text class="l" x="643" y="401">path4</text>
<path d="M609,416 L613.5,420 L609,424Z" fill="#6a6a6a"/>
<path d="M623.5,415 H628 L630,417 H635.5 V425 H623.5Z" fill="none" stroke="#3a7fe0" stroke-width="1.5"/>
<text class="l" x="643" y="424">g1</text>
<rect x="611.5" y="436.5" width="11.5" height="11.5" fill="none" stroke="#aaa" stroke-width="1.5"/>
<text class="l" x="631" y="446">rect1</text>
<g fill="#3f85f5"><rect x="1186" y="208" width="6" height="20.5"/><rect x="1186" y="230.5" width="6" height="20.5"/><rect x="1186" y="252.5" width="6" height="20.5"/><rect x="1186" y="275" width="6" height="20.5"/><rect x="1186" y="297.5" width="6" height="20.5"/><rect x="1186" y="319.5" width="6" height="20.5"/><rect x="1186" y="342" width="6" height="20.5"/><rect x="1186" y="364.5" width="6" height="20.5"/><rect x="1186" y="387" width="6" height="20.5"/><rect x="1186" y="409" width="6" height="20.5"/></g>
<rect x="1186" y="431.5" width="6" height="20.5" fill="#aaa"/>

<!-- fill box -->
<rect x="2" y="719" width="31" height="30" fill="#fff"/>
<rect x="9" y="726" width="17" height="16" fill="#ccc" opacity=".55"/>
<path d="M3,720 L32,748 M32,720 L3,748" stroke="#c8283c" stroke-width="2"/>
<rect x="14" y="730" width="7" height="8" fill="#8a6a6e" opacity=".6"/>

<!-- palette right -->
<path d="M1130.5,738 L1136,732.5 L1141.5,738" fill="none" stroke="#e8e8e8" stroke-width="1.9"/>
<path d="M1159.5,731 L1165,736.5 L1170.5,731" fill="none" stroke="#e8e8e8" stroke-width="1.9"/>
<rect x="1180.5" y="725" width="18" height="25" rx="4" fill="#333" stroke="#262626"/>
<path d="M1183,732H1196 M1183,737.5H1196 M1183,743H1196" stroke="#eee" stroke-width="2"/>

<!-- status -->
<text class="d j" x="19" y="764" textLength="39" lengthAdjust="spacingAndGlyphs">フィル: 複</text>
<text class="d j" x="78" y="764" textLength="15" lengthAdjust="spacingAndGlyphs" font-style="italic">なし</text>
<text class="d j" x="3" y="779" textLength="55" lengthAdjust="spacingAndGlyphs">ストローク: 複</text>
<rect x="61" y="767" width="46" height="15" rx="1" fill="#000"/>
<text class="d" x="117" y="780" textLength="25" lengthAdjust="spacingAndGlyphs">0.265</text>
<text class="d" x="149" y="771" textLength="11" lengthAdjust="spacingAndGlyphs">O:</text>
<rect class="box" x="162.5" y="752.5" width="66" height="30.5" rx="5"/>
<path d="M196.5,753V782" stroke="#2a2a2a"/>
<text class="v" x="169" y="771" textLength="16" lengthAdjust="spacingAndGlyphs">100</text>
<use href="#sp" x="204.5" y="767"/>
<g opacity=".3"><use href="#pl" x="219.5" y="767"/></g>
<rect x="244" y="758" width="2.5" height="17" fill="#3a7fe0"/>
<text class="d" x="253" y="771" textLength="34" lengthAdjust="spacingAndGlyphs">Layer 1</text>
<g transform="translate(313,767)"><path d="M-7,-1 C-4,-5 4,-5 7,-1 C4,5 -4,5 -7,-1Z" fill="none" stroke="#e8e8e8" stroke-width="1.7"/><circle class="w" cx="0" cy="0" r="2.4"/><path d="M-6,-5 L-4,-3 M6,-5 L4,-3 M0,-7 V-5" stroke="#e8e8e8"/></g>
<g transform="translate(347,767)"><rect class="w" x="-5.5" y="-1" width="9.5" height="7.5"/><path class="s" d="M2,-1 V-3.5 A2.8,2.8 0 0 1 7.5,-3.5 V-2" stroke-width="1.6"/></g>
<text class="d j" x="373" y="764" textLength="544" lengthAdjust="spacingAndGlyphs">2 個の パス オブジェクトが選択されています 所属: レイヤー Layer 1. 選択オブジェクトのクリックで拡大縮小ハンドル/回転ハンド</text>
<text class="d j" x="373" y="780" textLength="85" lengthAdjust="spacingAndGlyphs">ルが切り替わります。</text>
<path d="M919.5,752V784" stroke="#2d2d2d"/>
<text class="d" x="928" y="764">X:</text><text class="d" x="928" y="780">Y:</text>
<text class="d" x="950" y="764" textLength="31" lengthAdjust="spacingAndGlyphs">149.17</text>
<text class="d" x="956" y="780" textLength="25" lengthAdjust="spacingAndGlyphs">72.17</text>
<text class="d" x="990" y="771" textLength="9" lengthAdjust="spacingAndGlyphs">Z:</text>
<rect class="box" x="1000.5" y="752.5" width="80.5" height="30.5" rx="5"/>
<path d="M1040.5,753V782 M1059.5,753V782" stroke="#2a2a2a"/>
<text class="v" x="1008" y="771" textLength="25" lengthAdjust="spacingAndGlyphs" style="fill:#b8c0c8">137%</text>
<use href="#sp" x="1050" y="767"/><use href="#pl" x="1069" y="767"/>
<text class="d" x="1091" y="771" textLength="9" lengthAdjust="spacingAndGlyphs">R:</text>
<rect class="box" x="1101" y="752.5" width="87" height="30.5" rx="5"/>
<path d="M1146.5,753V782 M1165.5,753V782" stroke="#2a2a2a"/>
<text class="v" x="1113" y="771" textLength="24" lengthAdjust="spacingAndGlyphs">0.00°</text>
<use href="#sp" x="1156" y="767"/><use href="#pl" x="1175" y="767"/>
</svg>
<div id="pal">
<i style="background:#000;position:relative"><svg width="15" height="15" style="left:0;top:0"><circle cx="7.5" cy="8.5" r="4" fill="none" stroke="#ddd" stroke-width="1.2"/></svg></i><i style="background:#1a1a1a"></i><i style="background:#333"></i><i style="background:#4d4d4d"></i><i style="background:#666"></i><i style="background:#808080"></i><i style="background:#999"></i><i style="background:#b3b3b3"></i><i style="background:#ccc"></i><i style="background:#e6e6e6"></i><i style="background:#ececec"></i><i style="background:#f2f2f2"></i><i style="background:#f9f9f9"></i><i style="background:#fff"></i>
<i style="background:#800000"></i><i style="background:#f00"></i><i style="background:#808000"></i><i style="background:#ff0"></i><i style="background:#008000"></i><i style="background:#0f0"></i><i style="background:#008080"></i><i style="background:#0ff"></i><i style="background:#000080"></i><i style="background:#00f"></i><i style="background:#800080"></i><i style="background:#f0f"></i>
<i style="background:#2b0000"></i><i style="background:#500"></i><i style="background:#800000"></i><i style="background:#a00"></i><i style="background:#d40000"></i><i style="background:#f00"></i><i style="background:#ff2a2a"></i><i style="background:#f55"></i><i style="background:#ff8080"></i><i style="background:#faa"></i><i style="background:#ffd5d5"></i>
<i style="background:#280b0b"></i><i style="background:#501616"></i><i style="background:#782121"></i><i style="background:#a02c2c"></i><i style="background:#c83737"></i><i style="background:#d35f5f"></i><i style="background:#de8787"></i><i style="background:#e9afaf"></i><i style="background:#f4d7d7"></i>
<i style="background:#241c1c"></i><i style="background:#483737"></i><i style="background:#6c5353"></i><i style="background:#917c7c"></i><i style="background:#ac9393"></i><i style="background:#c8b7b7"></i><i style="background:#e3dbdb"></i>
<i style="background:#2b1100"></i><i style="background:#520"></i><i style="background:#803300"></i><i style="background:#a40"></i><i style="background:#d45500"></i><i style="background:#f60"></i><i style="background:#ff7f2a"></i><i style="background:#f95"></i><i style="background:#ffb380"></i><i style="background:#fca"></i><i style="background:#ffe6d5"></i>
<i style="background:#28170b"></i><i style="background:#502d16"></i><i style="background:#784421"></i><i style="background:#a05a2c"></i>
</div>
</body></html>
